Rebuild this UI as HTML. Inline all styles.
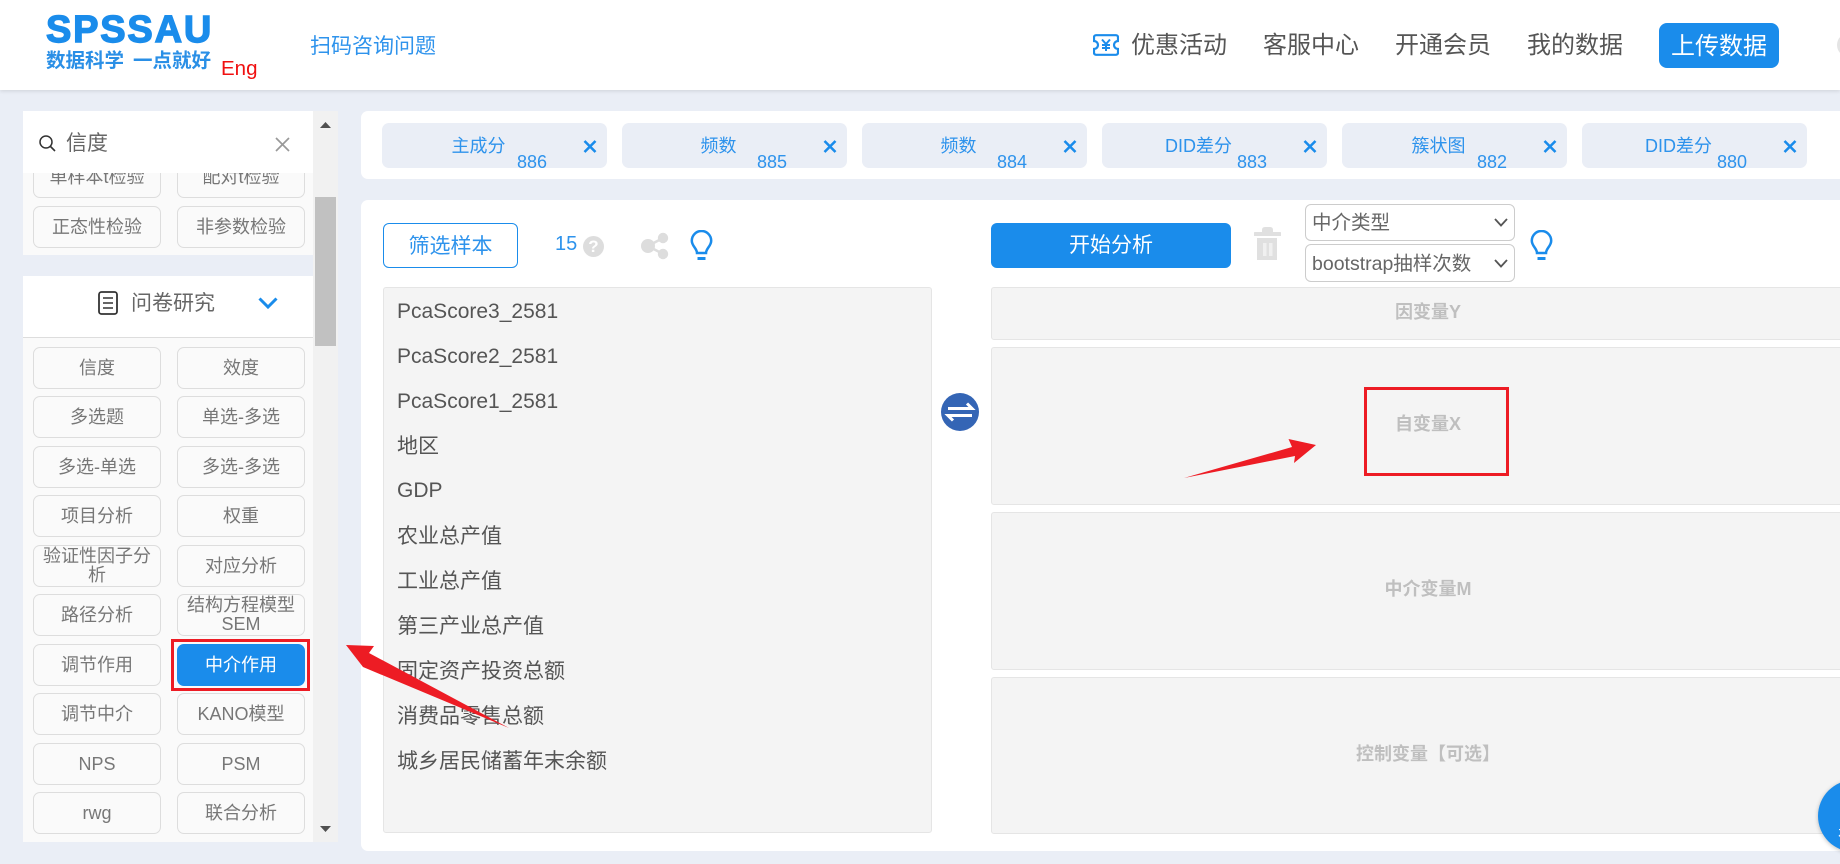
<!DOCTYPE html>
<html lang="zh">
<head>
<meta charset="utf-8">
<title>SPSSAU</title>
<style>
html,body{margin:0;padding:0;width:1840px;height:864px;overflow:hidden;background:#eaeef6;}
body{position:relative;font-family:"Liberation Sans","Noto Sans CJK SC",sans-serif;color:#555;}
.a{position:absolute;white-space:nowrap;}
#hd{position:absolute;left:0;top:0;width:1840px;height:90px;background:#fff;box-shadow:0 1px 4px rgba(0,0,0,.12);}
.nav{position:absolute;top:30px;font-size:24px;line-height:32px;color:#555;white-space:nowrap;}
#side{position:absolute;left:23px;top:111px;width:290px;height:731px;overflow:hidden;background:#fff;}
.gbg{position:absolute;left:0;width:290px;background:#fafafa;}
.b{position:absolute;box-sizing:border-box;width:128px;height:42px;border:1px solid #ddd;border-radius:7px;background:#fafafa;color:#777;font-size:18px;line-height:19px;text-align:center;display:flex;align-items:center;justify-content:center;}
.c1{left:10px;}.c2{left:154px;}
.tab{position:absolute;top:123px;width:225px;height:45px;background:#eaeef6;border-radius:7px;color:#2e93ec;font-size:18px;}
.tab .t{position:absolute;left:-2px;width:197px;top:10px;line-height:26px;text-align:center;}
.tab .n{position:absolute;left:135px;top:28px;line-height:22px;}
.tab .x{position:absolute;left:201px;top:17px;}
.it{position:absolute;left:397px;font-size:21px;line-height:30px;color:#555;white-space:nowrap;}
.box{position:absolute;left:991px;width:900px;box-sizing:border-box;background:#f4f4f4;border:1px solid #e5e5e5;border-radius:3px;}
.lb{position:absolute;left:1228px;width:400px;text-align:center;font-size:18px;line-height:24px;font-weight:bold;color:#bfbfbf;}
.sel{position:absolute;left:1305px;width:210px;box-sizing:border-box;border:1px solid #ccc;border-radius:6px;background:#fff;font-size:19.5px;color:#666;padding-left:6px;white-space:nowrap;}
</style>
</head>
<body>
<div id="hd"></div>
<div class="a" style="left:46px;top:11px;font-size:38px;line-height:38px;font-weight:bold;color:#1a8ceb;-webkit-text-stroke:1.400px #1a8ceb;letter-spacing:1.800px;">SPSSAU</div>
<div class="a" style="left:46px;top:48px;font-size:19.5px;line-height:26px;font-weight:bold;color:#2a8fe6;">数据科学</div>
<div class="a" style="left:133px;top:48px;font-size:19.5px;line-height:26px;font-weight:bold;color:#2a8fe6;">一点就好</div>
<div class="a" style="left:221px;top:56px;font-size:20.5px;line-height:26px;color:#f01010;">Eng</div>
<div class="a" style="left:310px;top:32px;font-size:21px;line-height:30px;color:#2e93ec;">扫码咨询问题</div>

<svg class="a" style="left:1093px;top:34px;" width="26" height="22" viewBox="0 0 26 22" fill="none"><path d="M3 1.200H23a2 2 0 0 1 2 2V7a4 4 0 0 0 0 8v3.800a2 2 0 0 1-2 2H3a2 2 0 0 1-2-2V15a4 4 0 0 0 0-8V3.200a2 2 0 0 1 2-2z" stroke="#1a8ceb" stroke-width="2.200"/><path d="M9 5.500l4 4.500 4-4.500M13 10v7M9 11h8M9 14h8" stroke="#1a8ceb" stroke-width="2"/></svg>
<div class="nav" style="left:1131px;">优惠活动</div>
<div class="nav" style="left:1263px;">客服中心</div>
<div class="nav" style="left:1395px;">开通会员</div>
<div class="nav" style="left:1527px;">我的数据</div>
<div class="a" style="left:1659px;top:23px;width:120px;height:45px;border-radius:8px;background:#1a8ceb;color:#fff;font-size:24px;line-height:47px;text-align:center;">上传数据</div>
<div class="a" style="left:1837px;top:33px;width:24px;height:24px;border-radius:50%;background:#e4e4e4;"></div>

<!-- sidebar -->
<div id="side">
  <div class="gbg" style="top:62px;height:82px;"></div>
  <div class="a" style="left:0;top:144px;width:290px;height:21px;background:#eaeef6;"></div>
  <div class="gbg" style="top:227px;height:504px;"></div>
  <div class="a" style="left:0;top:226px;width:290px;height:1px;background:#ddd;"></div>

  <div class="b c1" style="top:45px;">单样本t检验</div>
  <div class="b c2" style="top:45px;">配对t检验</div>
  <div class="b c1" style="top:95px;">正态性检验</div>
  <div class="b c2" style="top:95px;">非参数检验</div>

  <div class="a" style="left:0;top:0;width:290px;height:62px;background:#fff;"></div>
  <svg class="a" style="left:16px;top:24px;" width="17" height="17" viewBox="0 0 17 17" fill="none"><circle cx="7" cy="7" r="6" stroke="#333" stroke-width="1.500"/><path d="M11.500 11.500L16 16" stroke="#333" stroke-width="1.600"/></svg>
  <div class="a" style="left:43px;top:18px;font-size:21px;line-height:30px;color:#666;">信度</div>
  <svg class="a" style="left:252px;top:26px;" width="15" height="15" viewBox="0 0 15 15" fill="none"><path d="M1 1L14 14M14 1L1 14" stroke="#999" stroke-width="1.700"/></svg>

  <svg class="a" style="left:75px;top:180px;" width="20" height="24" viewBox="0 0 20 24" fill="none"><rect x="1" y="1" width="18" height="22" rx="2.500" stroke="#333" stroke-width="1.800"/><path d="M5 7H15M5 12H15M5 17H15" stroke="#333" stroke-width="1.600"/></svg>
  <div class="a" style="left:108px;top:178px;font-size:21px;line-height:30px;color:#666;">问卷研究</div>
  <svg class="a" style="left:235px;top:186px;" width="20" height="12" viewBox="0 0 20 12" fill="none"><path d="M1.500 1.500L10 10L18.500 1.500" stroke="#1a8ceb" stroke-width="3"/></svg>

  <div class="b c1" style="top:236px;">信度</div><div class="b c2" style="top:236px;">效度</div>
  <div class="b c1" style="top:285px;">多选题</div><div class="b c2" style="top:285px;">单选-多选</div>
  <div class="b c1" style="top:335px;">多选-单选</div><div class="b c2" style="top:335px;">多选-多选</div>
  <div class="b c1" style="top:384px;">项目分析</div><div class="b c2" style="top:384px;">权重</div>
  <div class="b c1" style="top:434px;">验证性因子分<br>析</div><div class="b c2" style="top:434px;">对应分析</div>
  <div class="b c1" style="top:483px;">路径分析</div><div class="b c2" style="top:483px;">结构方程模型<br>SEM</div>
  <div class="b c1" style="top:533px;">调节作用</div><div class="b c2" style="top:533px;background:#1a8ceb;border-color:#1a8ceb;color:#fff;">中介作用</div>
  <div class="b c1" style="top:582px;">调节中介</div><div class="b c2" style="top:582px;">KANO模型</div>
  <div class="b c1" style="top:632px;">NPS</div><div class="b c2" style="top:632px;">PSM</div>
  <div class="b c1" style="top:681px;">rwg</div><div class="b c2" style="top:681px;">联合分析</div>
</div>

<!-- scrollbar -->
<div class="a" style="left:313px;top:111px;width:25px;height:731px;background:#f1f1f1;"></div>
<div class="a" style="left:315px;top:197px;width:21px;height:149px;background:#c1c1c1;"></div>
<svg class="a" style="left:320px;top:122px;" width="11" height="6"><path d="M5.500 0L11 6H0z" fill="#505050"/></svg>
<svg class="a" style="left:320px;top:826px;" width="11" height="6"><path d="M0 0H11L5.500 6z" fill="#505050"/></svg>

<!-- tabs -->
<div class="a" style="left:361px;top:111px;width:1500px;height:68px;background:#fff;border-radius:7px;"></div>
<div class="tab" style="left:382px;"><div class="t">主成分</div><div class="n">886</div><svg class="x" width="14" height="13" viewBox="0 0 14 13" fill="none"><path d="M1.500 1L12.500 12M12.500 1L1.500 12" stroke="#1a8ceb" stroke-width="2.600"/></svg></div>
<div class="tab" style="left:622px;"><div class="t">频数</div><div class="n">885</div><svg class="x" width="14" height="13" viewBox="0 0 14 13" fill="none"><path d="M1.500 1L12.500 12M12.500 1L1.500 12" stroke="#1a8ceb" stroke-width="2.600"/></svg></div>
<div class="tab" style="left:862px;"><div class="t">频数</div><div class="n">884</div><svg class="x" width="14" height="13" viewBox="0 0 14 13" fill="none"><path d="M1.500 1L12.500 12M12.500 1L1.500 12" stroke="#1a8ceb" stroke-width="2.600"/></svg></div>
<div class="tab" style="left:1102px;"><div class="t">DID差分</div><div class="n">883</div><svg class="x" width="14" height="13" viewBox="0 0 14 13" fill="none"><path d="M1.500 1L12.500 12M12.500 1L1.500 12" stroke="#1a8ceb" stroke-width="2.600"/></svg></div>
<div class="tab" style="left:1342px;"><div class="t">簇状图</div><div class="n">882</div><svg class="x" width="14" height="13" viewBox="0 0 14 13" fill="none"><path d="M1.500 1L12.500 12M12.500 1L1.500 12" stroke="#1a8ceb" stroke-width="2.600"/></svg></div>
<div class="tab" style="left:1582px;"><div class="t">DID差分</div><div class="n">880</div><svg class="x" width="14" height="13" viewBox="0 0 14 13" fill="none"><path d="M1.500 1L12.500 12M12.500 1L1.500 12" stroke="#1a8ceb" stroke-width="2.600"/></svg></div>

<!-- main panel -->
<div class="a" style="left:361px;top:200px;width:1500px;height:651px;background:#fff;border-radius:7px;"></div>
<div class="a" style="left:383px;top:223px;width:135px;height:45px;box-sizing:border-box;border:1px solid #1a8ceb;border-radius:6px;color:#2e93ec;font-size:21px;line-height:45px;text-align:center;">筛选样本</div>
<div class="a" style="left:555px;top:230px;font-size:20px;line-height:28px;color:#2e93ec;">15</div>
<div class="a" style="left:583px;top:236px;width:21px;height:21px;border-radius:50%;background:#ddd;color:#fff;font-size:17px;font-weight:bold;line-height:21px;text-align:center;">?</div>
<svg class="a" style="left:641px;top:231px;" width="28" height="29" viewBox="0 0 28 29"><path d="M7 15L22 7M7 15L22 23" stroke="#ddd" stroke-width="2.500"/><circle cx="7" cy="15" r="7" fill="#ddd"/><circle cx="22" cy="7" r="5.200" fill="#ddd"/><circle cx="22" cy="23" r="5.200" fill="#ddd"/></svg>
<svg class="a" style="left:690px;top:230px;" width="23" height="30" viewBox="0 0 23 30" fill="none"><path d="M7 23C7 18.500 1.800 16 1.800 10.700a9.700 9.700 0 0 1 19.400 0C21.200 16 16 18.500 16 23z" stroke="#1a8ceb" stroke-width="2.500"/><path d="M7.500 28.500H15.500" stroke="#1a8ceb" stroke-width="3"/></svg>

<div class="a" style="left:383px;top:287px;width:549px;height:546px;box-sizing:border-box;background:#f4f4f4;border:1px solid #e5e5e5;border-radius:3px;"></div>
<div class="it" style="top:297px;">PcaScore3_2581</div>
<div class="it" style="top:342px;">PcaScore2_2581</div>
<div class="it" style="top:387px;">PcaScore1_2581</div>
<div class="it" style="top:432px;">地区</div>
<div class="it" style="top:476px;">GDP</div>
<div class="it" style="top:522px;">农业总产值</div>
<div class="it" style="top:567px;">工业总产值</div>
<div class="it" style="top:612px;">第三产业总产值</div>
<div class="it" style="top:657px;">固定资产投资总额</div>
<div class="it" style="top:702px;">消费品零售总额</div>
<div class="it" style="top:747px;">城乡居民储蓄年末余额</div>

<svg class="a" style="left:941px;top:393px;" width="38" height="38" viewBox="0 0 38 38"><circle cx="19" cy="19" r="19" fill="#3465b5"/><path d="M7 15.500H31L26 10.500" fill="none" stroke="#fff" stroke-width="3"/><path d="M31 22.500H7L12 27.500" fill="none" stroke="#fff" stroke-width="3"/></svg>

<div class="a" style="left:991px;top:223px;width:240px;height:45px;border-radius:6px;background:#1a8ceb;color:#fff;font-size:21px;line-height:46px;text-align:center;">开始分析</div>
<svg class="a" style="left:1254px;top:227px;" width="27" height="33" viewBox="0 0 27 33"><path d="M0 5.500Q0 5 1 5H26Q27 5 27 5.500V9H0zM8 3Q8 0 11 0h5Q19 0 19 3V5H8z" fill="#e0e0e0"/><path d="M3 11H23V33H3z" fill="#e0e0e0"/><path d="M9 16H12.500V29H9zM15 16H18.500V29H15z" fill="#f0f0f0"/></svg>
<div class="sel" style="top:204px;height:37px;line-height:36px;">中介类型<svg style="position:absolute;left:188px;top:13px;" width="14" height="9" viewBox="0 0 14 9" fill="none"><path d="M1 1L7 7.500L13 1" stroke="#555" stroke-width="1.800"/></svg></div>
<div class="sel" style="top:244px;height:38px;line-height:38px;">bootstrap抽样次数<svg style="position:absolute;left:188px;top:14px;" width="14" height="9" viewBox="0 0 14 9" fill="none"><path d="M1 1L7 7.500L13 1" stroke="#555" stroke-width="1.800"/></svg></div>
<svg class="a" style="left:1530px;top:230px;" width="23" height="30" viewBox="0 0 23 30" fill="none"><path d="M7 23C7 18.500 1.800 16 1.800 10.700a9.700 9.700 0 0 1 19.400 0C21.200 16 16 18.500 16 23z" stroke="#1a8ceb" stroke-width="2.500"/><path d="M7.500 28.500H15.500" stroke="#1a8ceb" stroke-width="3"/></svg>

<div class="box" style="top:287px;height:53px;"></div>
<div class="box" style="top:347px;height:158px;"></div>
<div class="box" style="top:512px;height:158px;"></div>
<div class="box" style="top:677px;height:157px;"></div>
<div class="lb" style="top:300px;">因变量Y</div>
<div class="lb" style="top:412px;">自变量X</div>
<div class="lb" style="top:577px;">中介变量M</div>
<div class="lb" style="top:742px;">控制变量【可选】</div>

<!-- blue float -->
<div class="a" style="left:1818px;top:780px;width:72px;height:72px;border-radius:50%;background:#1a8ceb;box-shadow:0 1px 4px rgba(0,0,0,.25);overflow:hidden;"><span style="position:absolute;left:20px;top:46px;color:#fff;font-size:16px;line-height:20px;">在线</span></div>

<!-- annotations -->
<div class="a" style="left:171px;top:639px;width:139px;height:52px;box-sizing:border-box;border:3.500px solid #ed1c24;"></div>
<div class="a" style="left:1364px;top:387px;width:145px;height:89px;box-sizing:border-box;border:3px solid #ed1c24;"></div>
<svg class="a" style="left:0;top:0;pointer-events:none;" width="1840" height="864"><path d="M346 645L374 646L369 653L509 728L363 667z" fill="#ed1c24"/><path d="M1184 478L1292 447L1288.500 439L1316 445L1294 463L1295 456z" fill="#ed1c24"/></svg>
</body>
</html>
